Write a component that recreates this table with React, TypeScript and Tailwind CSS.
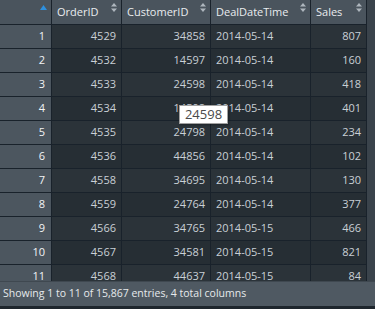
import React from "react";

const rows: [number, string, string, string, string][] = [
  [1, "4529", "34858", "2014-05-14", "807"],
  [2, "4532", "14597", "2014-05-14", "160"],
  [3, "4533", "24598", "2014-05-14", "418"],
  [4, "4534", "14598", "2014-05-14", "401"],
  [5, "4535", "24798", "2014-05-14", "234"],
  [6, "4536", "44856", "2014-05-14", "102"],
  [7, "4558", "34695", "2014-05-14", "130"],
  [8, "4559", "24764", "2014-05-14", "377"],
  [9, "4566", "34765", "2014-05-15", "466"],
  [10, "4567", "34581", "2014-05-15", "821"],
  [11, "4568", "44637", "2014-05-15", "84"],
];

function SortIcon() {
  return (
    <svg width="6" height="9" viewBox="0 0 6 9" className="absolute right-[4px] top-[3px]">
      <path d="M3 0 L6 3.5 L0 3.5 Z" fill="#aeb6bd" />
      <path d="M0 5.5 L6 5.5 L3 9 Z" fill="#aeb6bd" />
    </svg>
  );
}

function Header({ label }: { label: string }) {
  return (
    <div className="relative h-[25px] flex items-center pl-[5px] border-r border-b border-[#19222b] bg-[#4a545d] text-[#e9ecef]">
      {label}
      <SortIcon />
    </div>
  );
}

export default function App() {
  return (
    <div
      className="w-[375px] h-[309px] overflow-hidden flex flex-col bg-[#3a434b] text-[11px]"
      style={{ fontFamily: '"Open Sans", "Noto Sans", sans-serif' }}
    >
      <div className="relative h-[281px] overflow-hidden">
        <div className="grid grid-cols-[52px_70px_89px_100px_56px_8px]">
          <div className="relative h-[25px] border-r border-b border-[#19222b] bg-[#4a545d]">
            <svg width="7" height="5" viewBox="0 0 7 5" className="absolute left-[40px] top-[5px]">
              <path d="M3.5 0 L7 5 L0 5 Z" fill="#2e90de" />
            </svg>
          </div>
          <Header label="OrderID" />
          <Header label="CustomerID" />
          <Header label="DealDateTime" />
          <Header label="Sales" />
          <div className="h-[25px] bg-[#3a434b]" />
          {rows.map(([n, order, cust, date, sales]) => {
            const bg = n % 2 === 1 ? "bg-[#2b3339]" : "bg-[#262e34]";
            return (
              <React.Fragment key={n}>
                <div className="h-[24px] flex items-center justify-end pr-[6px] border-r border-b border-[#19222b] bg-[#4c565f] text-[#f2f4f6]">
                  {n}
                </div>
                <div className={`h-[24px] flex items-center justify-end pr-[5px] border-r border-b border-[#19222b] text-[#c9d0d6] ${bg}`}>
                  {order}
                </div>
                <div className={`h-[24px] flex items-center justify-end pr-[5px] border-r border-b border-[#19222b] text-[#c9d0d6] ${bg}`}>
                  {cust}
                </div>
                <div className={`h-[24px] flex items-center pl-[5px] border-r border-b border-[#19222b] text-[#c9d0d6] ${bg}`}>
                  {date}
                </div>
                <div className={`h-[24px] flex items-center justify-end pr-[5px] border-r border-b border-[#19222b] text-[#c9d0d6] ${bg}`}>
                  {sales}
                </div>
                <div className="h-[24px] bg-[#3a434b]" />
              </React.Fragment>
            );
          })}
        </div>
        <div className="absolute left-[179px] top-[105px] h-[19px] w-[49px] flex items-center justify-center bg-white border border-[#a0a0a0] text-[13px] text-[#4a4a4a] shadow-[1px_1px_2px_rgba(0,0,0,0.3)]">
          24598
        </div>
      </div>
      <div className="h-[25px] flex items-center pl-[3px] bg-[#4f5962] text-[#e6e9ec] text-[10.5px] border-t border-[#3f4850]">
        Showing 1 to 11 of 15,867 entries, 4 total columns
      </div>
      <div className="flex-1 bg-[#1e262d]" />
    </div>
  );
}
